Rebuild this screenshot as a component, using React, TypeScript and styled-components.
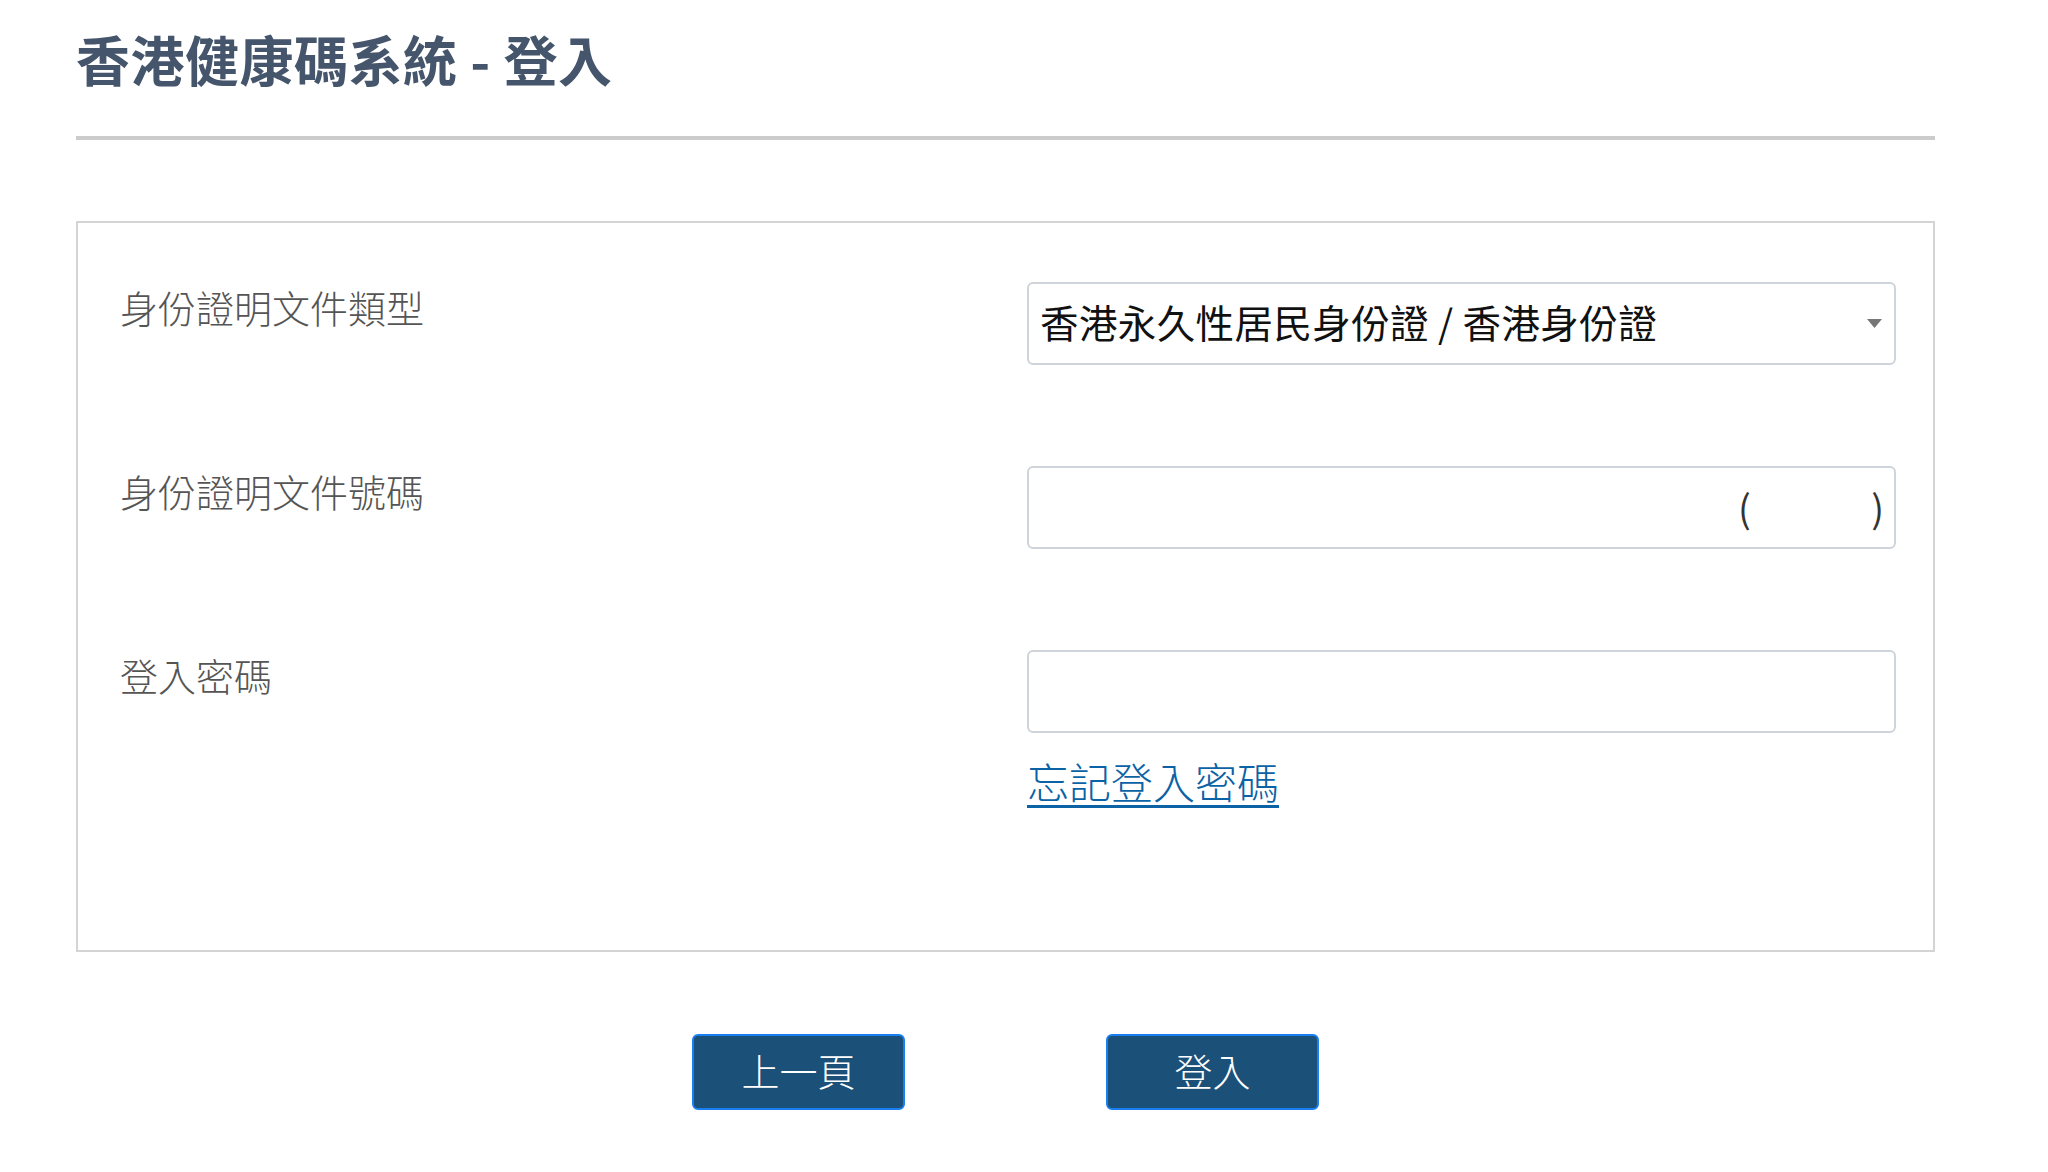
import { FC } from "react";
import { styled, createGlobalStyle } from "styled-components";

const GlobalStyle = createGlobalStyle`
  html, body {
    margin: 0;
    padding: 0;
    background: #ffffff;
  }
  body {
    font-family: "Noto Sans CJK TC", "Noto Sans", sans-serif;
  }
  * {
    box-sizing: border-box;
  }
`;

const Page = styled.div`
  width: 1935px;
  padding: 27px 0 60px 76px;
`;

const Title = styled.h1`
  margin: 0;
  font-size: 54px;
  line-height: 64px;
  font-weight: 700;
  color: #45556b;
  letter-spacing: 0.5px;
`;

const Divider = styled.div`
  height: 4px;
  margin-top: 45px;
  background: #cccccc;
`;

const FormBox = styled.div`
  margin-top: 81px;
  border: 2px solid #d4d4d4;
  padding: 59px 37px 138px 42px;
`;

const FormGrid = styled.div`
  display: grid;
  grid-template-columns: 907px 1fr;
  row-gap: 101px;
  align-items: start;
`;

const Label = styled.div`
  font-size: 38px;
  line-height: 50px;
  font-weight: 300;
  color: #555555;
`;

const Control = styled.div`
  display: flex;
  flex-direction: column;
`;

const FieldWrap = styled.div`
  position: relative;
  height: 83px;
`;

const fieldBase = `
  width: 100%;
  height: 83px;
  border: 2px solid #cfd4da;
  border-radius: 6px;
  background: #ffffff;
  font-family: "Noto Sans CJK TC", sans-serif;
  font-size: 38.5px;
  color: #111111;
  outline: none;
  appearance: none;
`;

const Select = styled.select`
  ${fieldBase}
  padding: 0 60px 6px 11px;
  letter-spacing: 0.4px;
  cursor: pointer;
`;

const TextInput = styled.input`
  ${fieldBase}
  padding: 0 12px;
`;

const Caret = styled.svg`
  position: absolute;
  right: 14px;
  top: 37px;
  width: 15px;
  height: 9px;
  pointer-events: none;
`;

const CheckDigit = styled.div`
  position: absolute;
  top: 0;
  right: 12px;
  height: 80px;
  width: 146px;
  display: flex;
  align-items: center;
  justify-content: space-between;
  font-size: 38px;
  color: #333333;
  pointer-events: none;
`;

const ForgotLink = styled.a`
  align-self: flex-start;
  margin-top: 16px;
  font-size: 42px;
  line-height: 63px;
  font-weight: 300;
  color: #0b62a5;
  text-decoration: underline;
  text-decoration-thickness: 3px;
  text-underline-offset: 6px;
  cursor: pointer;
`;

const ButtonRow = styled.div`
  display: flex;
  justify-content: center;
  gap: 201px;
  margin-top: 82px;
`;

const ActionButton = styled.button`
  width: 213px;
  height: 76px;
  padding: 0 0 6px;
  border: 2px solid #1a7ff0;
  border-radius: 6px;
  background: #1b5078;
  color: #ffffff;
  font-family: "Noto Sans CJK TC", sans-serif;
  font-size: 38px;
  font-weight: 300;
  cursor: pointer;
`;

const App: FC = () => {
  return (
    <>
      <GlobalStyle />
      <Page>
        <Title>香港健康碼系統 - 登入</Title>
        <Divider />
        <FormBox>
          <FormGrid>
            <Label>身份證明文件類型</Label>
            <Control>
              <FieldWrap>
                <Select defaultValue="hkid">
                  <option value="hkid">香港永久性居民身份證 / 香港身份證</option>
                </Select>
                <Caret viewBox="0 0 15 9">
                  <path d="M0 0 L15 0 L7.5 9 Z" fill="#777777" />
                </Caret>
              </FieldWrap>
            </Control>

            <Label>身份證明文件號碼</Label>
            <Control>
              <FieldWrap>
                <TextInput type="text" />
                <CheckDigit>
                  <span>(</span>
                  <span>)</span>
                </CheckDigit>
              </FieldWrap>
            </Control>

            <Label>登入密碼</Label>
            <Control>
              <FieldWrap>
                <TextInput type="password" />
              </FieldWrap>
              <ForgotLink>忘記登入密碼</ForgotLink>
            </Control>
          </FormGrid>
        </FormBox>
        <ButtonRow>
          <ActionButton type="button">上一頁</ActionButton>
          <ActionButton type="button">登入</ActionButton>
        </ButtonRow>
      </Page>
    </>
  );
};

export default App;
